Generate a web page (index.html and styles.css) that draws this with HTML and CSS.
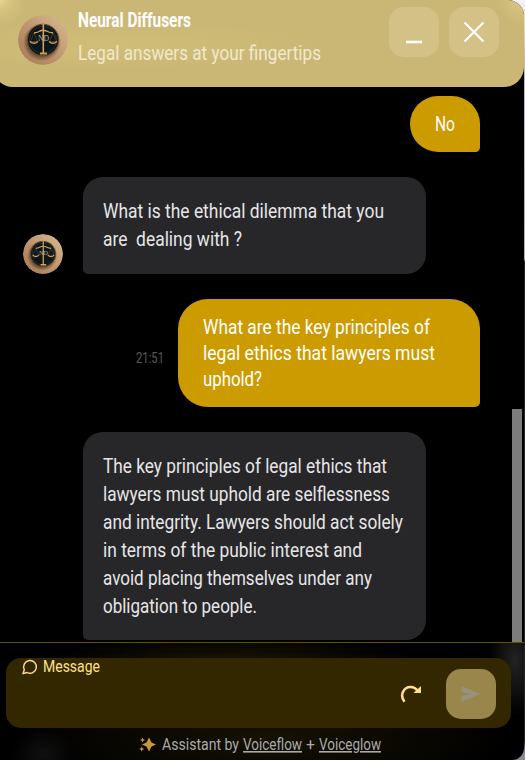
FILE: index.html
```html
<!DOCTYPE html>
<html lang="en">
<head>
<meta charset="utf-8">
<title>Neural Diffusers</title>
<link rel="stylesheet" href="styles.css">
</head>
<body>
<svg class="defs" width="0" height="0" aria-hidden="true">
  <defs>
    <linearGradient id="skin" x1="0" y1="1" x2="1" y2="0">
      <stop offset="0" stop-color="#a57853"/><stop offset=".45" stop-color="#bd936c"/><stop offset="1" stop-color="#dabb93"/>
    </linearGradient>
    <radialGradient id="shade"><stop offset=".7" stop-color="#3a2318" stop-opacity=".7"/><stop offset="1" stop-color="#3a2318" stop-opacity="0"/></radialGradient>
    <symbol id="seal" viewBox="0 0 50 50">
      <circle cx="25" cy="25" r="25" fill="url(#skin)"/>
      <circle cx="24" cy="27" r="19" fill="url(#shade)"/>
      <circle cx="25" cy="25" r="15.800" fill="#0c151c" stroke="#6b5430" stroke-width="1"/>
      <circle cx="25" cy="25" r="13.600" fill="none" stroke="#3a3526" stroke-width=".7"/>
      <g fill="none" stroke="#cfa15c">
        <path d="M25.300 9v30" stroke-width="1.600"/>
        <path d="M16 18q4-.5 6-2 3-1.500 6.500 0 2.500 1.500 6.500 2" stroke-width="1.400"/>
        <path d="M16 18l-3.500 8.500h7zM35 18l-3.500 8.500h7z" stroke-width=".5" opacity=".5"/>
        <path d="M12 26.500q4 3.500 8 0M31 26.500q4 3.500 8 0" stroke-width="1.400"/>
        <path d="M22 38.500h7" stroke-width="1.800"/>
      </g>
      <text x="20" y="26" class="seal-text" textLength="11" lengthAdjust="spacingAndGlyphs">ND</text>
    </symbol>
  </defs>
</svg>
<div class="widget">
  <header class="header">
    <svg class="avatar avatar-lg"><use href="#seal"/></svg>
    <div class="heading">
      <svg class="line title"><text y="20" textLength="113" lengthAdjust="spacingAndGlyphs">Neural Diffusers</text></svg>
      <svg class="line subtitle"><text y="20" textLength="243" lengthAdjust="spacingAndGlyphs">Legal answers at your fingertips</text></svg>
    </div>
    <button class="window-btn" aria-label="Minimize"><svg width="50" height="50"><path d="M17 35h16" stroke="#fff" stroke-width="2.600"/></svg></button>
    <button class="window-btn" aria-label="Close"><svg width="50" height="50"><path d="M15.500 15.500l19 19M34.500 15.500l-19 19" stroke="#fff" stroke-width="2.200"/></svg></button>
  </header>
  <main class="chat">
    <div class="row mine"><div class="bubble user short"><svg class="line"><text y="20" textLength="20" lengthAdjust="spacingAndGlyphs">No</text></svg></div></div>
    <div class="row">
      <svg class="avatar"><use href="#seal"/></svg>
      <div class="bubble bot question">
        <svg class="line"><text y="21" textLength="281" lengthAdjust="spacingAndGlyphs">What is the ethical dilemma that you</text></svg>
        <svg class="line"><text y="21" textLength="139" lengthAdjust="spacingAndGlyphs">are&#160; dealing with ?</text></svg>
      </div>
    </div>
    <div class="row mine">
      <svg class="time"><text x="2" y="14" textLength="28" lengthAdjust="spacingAndGlyphs">21:51</text></svg>
      <div class="bubble user">
        <svg class="line"><text y="20" textLength="227" lengthAdjust="spacingAndGlyphs">What are the key principles of</text></svg>
        <svg class="line"><text y="20" textLength="232" lengthAdjust="spacingAndGlyphs">legal ethics that lawyers must</text></svg>
        <svg class="line"><text y="20" textLength="59" lengthAdjust="spacingAndGlyphs">uphold?</text></svg>
      </div>
    </div>
    <div class="row">
      <div class="avatar"></div>
      <div class="bubble bot">
        <svg class="line"><text y="21" textLength="284" lengthAdjust="spacingAndGlyphs">The key principles of legal ethics that</text></svg>
        <svg class="line"><text y="21" textLength="287" lengthAdjust="spacingAndGlyphs">lawyers must uphold are selflessness</text></svg>
        <svg class="line"><text y="21" textLength="300" lengthAdjust="spacingAndGlyphs">and integrity. Lawyers should act solely</text></svg>
        <svg class="line"><text y="21" textLength="259" lengthAdjust="spacingAndGlyphs">in terms of the public interest and</text></svg>
        <svg class="line"><text y="21" textLength="269" lengthAdjust="spacingAndGlyphs">avoid placing themselves under any</text></svg>
        <svg class="line"><text y="21" textLength="154" lengthAdjust="spacingAndGlyphs">obligation to people.</text></svg>
      </div>
    </div>
    <div class="thumb"></div>
  </main>
  <footer class="footer">
    <div class="composer">
      <div class="placeholder">
        <svg width="16" height="16" viewBox="0 0 16 16" fill="none" stroke="#ffe08a" stroke-width="1.400" stroke-linejoin="round"><path d="M1 14.700l1.300-4A6.400 6.400 0 1 1 5 13.500z"/></svg>
        <svg class="placeholder-text"><text y="14" textLength="57" lengthAdjust="spacingAndGlyphs">Message</text></svg>
      </div>
      <svg class="restart" width="22" height="20" viewBox="0 0 22 20"><path d="M4.500 17.800C-.8 11 3.800 3 10.500 3c3.300 0 5.500 1.300 7 4" fill="none" stroke="#ffe08a" stroke-width="2.500"/><path d="M21 2v7h-7.500z" fill="#ffe08a"/></svg>
      <button class="send" aria-label="Send"><svg width="20" height="18" viewBox="0 0 20 18"><path d="M.5 1L19.500 9 .5 17v-6.200L11 9 .5 7.200z" fill="#98917d"/></svg></button>
    </div>
    <div class="credit">
      <svg class="sparkles" width="17" height="16" viewBox="0 0 17 16" fill="#c99a36"><path d="M10 .5l2.500 4.900 4.500 2.100-4.500 2.100-2.500 4.900-2.500-4.900-4.500-2.100 4.500-2.100zM3.500.5l.7 1.800 1.800.7-1.800.7-.7 1.800-.7-1.800L1 3l1.800-.7zM2.700 9.500l.8 1.800 1.800.8-1.800.7-.8 1.900-.7-1.900-1.900-.7 1.900-.8z"/></svg>
      <svg class="credit-text by"><text y="15" textLength="77" lengthAdjust="spacingAndGlyphs">Assistant by</text></svg>
      <svg class="credit-text link"><text y="15" textLength="59" lengthAdjust="spacingAndGlyphs">Voiceflow</text></svg>
      <svg class="credit-text plus"><text y="15" textLength="9" lengthAdjust="spacingAndGlyphs">+</text></svg>
      <svg class="credit-text link last"><text y="15" textLength="62" lengthAdjust="spacingAndGlyphs">Voiceglow</text></svg>
    </div>
  </footer>
</div>
</body>
</html>
```
FILE: styles.css
```css
* { box-sizing: border-box; }
body {
  margin: 0;
  font-family: Roboto, "Liberation Sans", sans-serif;
  background: linear-gradient(#f4f3f8 0, #b8b8be 60px, #b0b0b0 260px, #242424 261px, #242424 740px, #8d8a9c 752px);
}
.defs { position: absolute; }
.widget { width: 524px; height: 760px; display: flex; flex-direction: column; border-radius: 0 16px 12px 0; background: #000; overflow: hidden; }
.header {
  height: 87px;
  flex: none;
  display: flex;
  align-items: flex-start;
  margin-left: -7px;
  padding: 7px 25px 0 25px;
  border-radius: 0 0 20px 20px;
  background:
    radial-gradient(circle at 7px 0, #e6d795 0, rgba(221, 203, 133, .6) 10px, transparent 26px),
    radial-gradient(circle at 100% 0, #e6d795 0, rgba(221, 203, 133, .5) 10px, transparent 26px),
    radial-gradient(ellipse at 117px 45px, #d0bd76, #cab776 230px);
}
.avatar { width: 40px; height: 40px; flex: none; border-radius: 50%; }
.avatar-lg { width: 50px; height: 50px; margin-top: 8px; }
.seal-text { font: 8px "Liberation Serif", serif; fill: #c8b184; }
.heading { flex: 1; padding-left: 10px; }
.line { display: block; width: 100%; height: 28px; overflow: visible; font-size: 20px; fill: #e6e6e7; }
.title { fill: #fff; font-weight: 700; }
.subtitle { margin-top: 5px; fill: #f0e9ce; }
.window-btn { width: 50px; height: 50px; padding: 0; border: 0; border-radius: 15px; background: #d3c186; margin-left: 10px; }
.window-btn svg { display: block; }
.chat { flex: 1; min-height: 0; position: relative; display: flex; flex-direction: column; gap: 25px; padding: 9px 44px 0 23px; }
.row { display: flex; align-items: flex-end; gap: 20px; }
.mine { justify-content: flex-end; align-items: center; gap: 12px; }
.bot { width: 343px; padding: 20px; background: #27272a; border-radius: 20px 20px 20px 5px; }
.question { padding-bottom: 21px; }
.user { width: 302px; padding: 15px 25px; background: #cc9b00; border-radius: 30px 30px 5px 30px; }
.user .line { height: 26px; fill: #fff; }
.short { width: 70px; }
.time { width: 32px; height: 20px; font-size: 14px; fill: #5a5a5a; margin-top: 12px; overflow: visible; }
.thumb { position: absolute; right: 2px; top: 322px; width: 10px; height: 233px; background: #7c7c7c; }
.footer {
  height: 118px;
  flex: none;
  padding: 15px 13px 0 6px;
  border-top: 1px solid #684f00;
  background:
    radial-gradient(ellipse 26px 55px at 515px 18px, #232325, transparent),
    radial-gradient(ellipse 32px 28px at 43px 112px, #101010, transparent),
    radial-gradient(ellipse 190px 24px at 230px 18px, #1b1500, transparent),
    radial-gradient(ellipse 240px 60px at 270px 95px, #161203, transparent);
}
.composer { height: 70px; border-radius: 15px; background: #332700; display: flex; align-items: center; padding: 2px 15px 0 16px; }
.placeholder { align-self: flex-start; display: flex; align-items: center; gap: 5px; flex: 1; height: 18px; margin-top: -2px; }
.placeholder-text { width: 60px; height: 18px; font-size: 17px; fill: #ffe08a; overflow: visible; }
.send { width: 50px; height: 50px; margin-left: 24px; padding: 0; border: 0; border-radius: 15px; background: #99864b; display: flex; align-items: center; justify-content: center; }
.credit { display: flex; align-items: center; justify-content: center; gap: 4px; height: 33px; padding-left: 3px; }
.sparkles { margin-right: 2px; }
.credit-text { height: 20px; font-size: 16px; fill: #aaa; overflow: visible; }
.by { width: 77px; }
.link { width: 59px; text-decoration: underline; }
.plus { width: 9px; }
.last { width: 62px; }
```
